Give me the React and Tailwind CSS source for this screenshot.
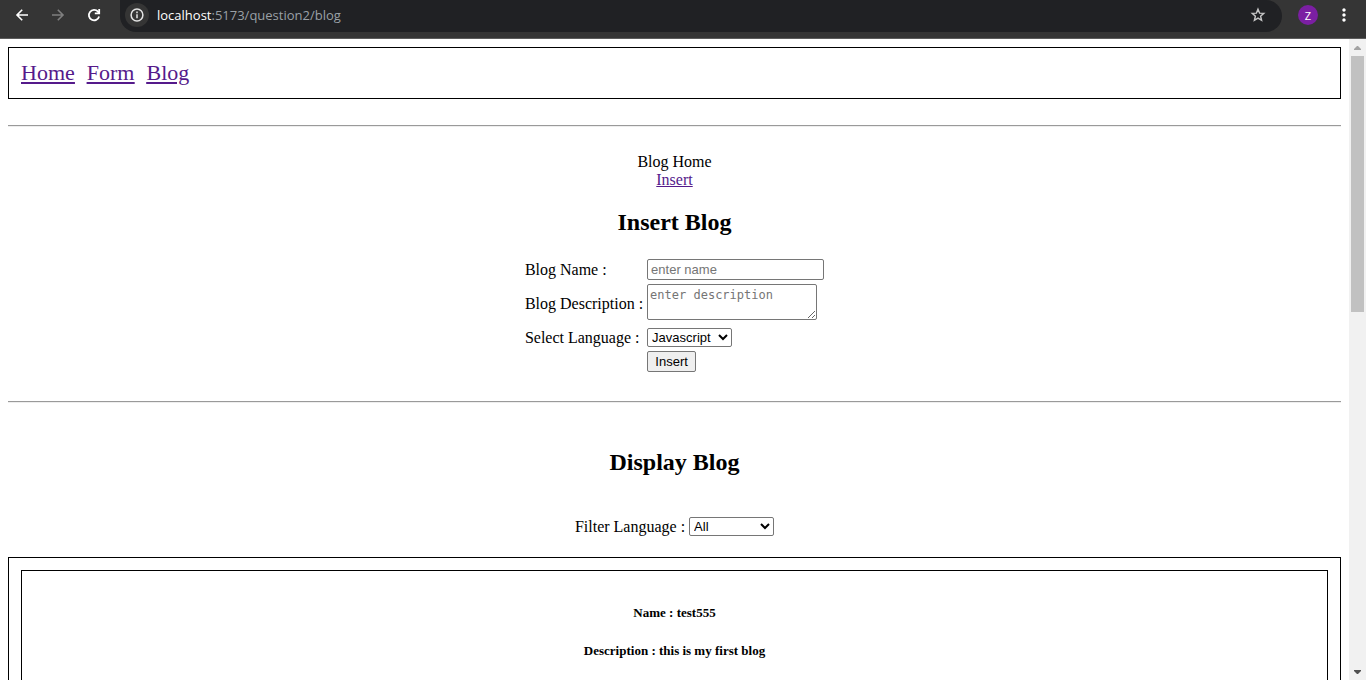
import { useState } from "react";
import { MdMoreVert } from "react-icons/md";

const LANGUAGES = ["Javascript", "Java", "Python", "PHP"];

const BLOGS = [{ name: "test555", description: "this is my first blog" }];

function BarIcon({ children }) {
  return (
    <svg
      width="16"
      height="16"
      viewBox="0 0 16 16"
      fill="none"
      stroke="currentColor"
      strokeWidth="1.6"
      aria-hidden="true"
    >
      {children}
    </svg>
  );
}

function BrowserBar() {
  return (
    <header className="flex h-[39px] shrink-0 items-start border-b border-[#5c5c5c] bg-[#353535] font-['Open_Sans',sans-serif]">
      <div className="flex h-[30px] w-[120px] shrink-0 items-center gap-5 pl-3.5 text-white">
        <button type="button" aria-label="Back">
          <BarIcon>
            <path d="M14 8H3.2M8.2 2.8 3 8l5.2 5.2" />
          </BarIcon>
        </button>
        <button type="button" aria-label="Forward" className="text-[#7f7f7f]">
          <BarIcon>
            <path d="M2 8h10.8M7.8 2.8 13 8l-5.2 5.2" />
          </BarIcon>
        </button>
        <button type="button" aria-label="Reload">
          <BarIcon>
            <path d="M13.1 9.5A5.2 5.2 0 1 1 12 4.7L13 5.8" strokeWidth="1.8" />
            <path d="M13.2 2v4.4H8.8" strokeWidth="1.8" />
          </BarIcon>
        </button>
      </div>
      <div className="flex h-8 min-w-0 flex-1 items-center rounded-b-2xl rounded-tr-2xl bg-[#202124] pb-0.5 pl-[5px] pr-4">
        <button
          type="button"
          aria-label="Site information"
          className="flex size-6 items-center justify-center rounded-full bg-[#353535] text-[#e3e3e3]"
        >
          <BarIcon>
            <circle cx="8" cy="8" r="5.9" strokeWidth="1.5" />
            <path d="M8 7.2v4M8 4.6v1.6" strokeWidth="1.5" />
          </BarIcon>
        </button>
        <p className="ml-2 flex-1 text-[13px] leading-5 text-[#9aa0a6]">
          <span className="text-white">localhost</span>:5173/question2/blog
        </p>
        <button type="button" aria-label="Bookmark this page" className="text-[#c7c7c7]">
          <BarIcon>
            <path
              d="m8 2.2 1.6 3.9 4.2.3-3.2 2.8 1 4.1L8 11.1l-3.6 2.2 1-4.1-3.2-2.8 4.2-.3z"
              strokeWidth="1.4"
            />
          </BarIcon>
        </button>
      </div>
      <div className="flex h-[30px] w-[84px] shrink-0 items-center gap-4 pl-4">
        <button
          type="button"
          aria-label="Profile"
          className="flex size-5 items-center justify-center rounded-full bg-[#7b1fa2] text-[11px] leading-none text-white"
        >
          Z
        </button>
        <button type="button" aria-label="Menu" className="text-white">
          <MdMoreVert className="size-5" />
        </button>
      </div>
    </header>
  );
}

function Scrollbar() {
  return (
    <div aria-hidden="true" className="flex w-[17px] shrink-0 flex-col items-center bg-[#f1f1f1]">
      <div className="flex h-[17px] items-center">
        <svg width="7" height="4" viewBox="0 0 7 4" fill="#a3a3a3">
          <path d="M0 4V3L3 0h1l3 3v1Z" />
        </svg>
      </div>
      <div className="h-64 w-[13px] bg-[#c1c1c1]" />
      <div className="mt-auto flex h-[17px] items-center">
        <svg width="7" height="4" viewBox="0 0 7 4" fill="#505050">
          <path d="M0 0h7v1L4 4H3L0 1Z" />
        </svg>
      </div>
    </div>
  );
}

function Rule() {
  return <hr className="h-0.5 border-t border-b border-t-[#9a9a9a] border-b-[#eeeeee]" />;
}

function LanguageSelect({ id, options, value, onChange }) {
  return (
    <select
      id={id}
      value={value}
      onChange={(event) => onChange(event.target.value)}
      className="h-[19px] w-[85px] rounded-[2px] border border-[#767676] bg-white font-['Liberation_Sans',Arial,sans-serif] text-[13px] text-black"
    >
      {options.map((option) => (
        <option key={option}>{option}</option>
      ))}
    </select>
  );
}

function InsertForm() {
  const [language, setLanguage] = useState("Javascript");

  return (
    <form
      onSubmit={(event) => event.preventDefault()}
      className="mt-[23px] grid grid-cols-[auto_auto] items-center justify-center gap-1 text-left"
    >
      <label htmlFor="blog-name">Blog Name :</label>
      <input
        id="blog-name"
        type="text"
        placeholder="enter name"
        className="h-[21px] w-[177px] rounded-[2px] border border-[#767676] px-[3px] font-['Liberation_Sans',Arial,sans-serif] text-[13px] placeholder:text-[#757575]"
      />
      <label htmlFor="blog-description">Blog Description :</label>
      <textarea
        id="blog-description"
        rows={2}
        placeholder="enter description"
        className="mb-1 h-9 w-[170px] rounded-[2px] border border-[#767676] px-0.5 py-[3px] font-['DejaVu_Sans_Mono',monospace] text-[12px] leading-[15px] placeholder:text-[#757575]"
      />
      <label htmlFor="blog-language">Select Language :</label>
      <LanguageSelect
        id="blog-language"
        options={LANGUAGES}
        value={language}
        onChange={setLanguage}
      />
      <button
        type="submit"
        className="col-start-2 h-[21px] w-[49px] rounded-[2px] border border-[#767676] bg-[#efefef] text-center font-['Liberation_Sans',Arial,sans-serif] text-[13px] leading-none"
      >
        Insert
      </button>
    </form>
  );
}

function BlogCard({ blog }) {
  return (
    <article className="border border-black pt-8 pb-72 text-[13px] leading-5 font-bold">
      <h5>Name : {blog.name}</h5>
      <h5 className="mt-[18px]">Description : {blog.description}</h5>
    </article>
  );
}

export default function App() {
  const [filter, setFilter] = useState("All");

  return (
    <div className="flex h-screen flex-col overflow-hidden bg-white">
      <BrowserBar />
      <div className="flex min-h-0 flex-1">
        <main className="min-w-0 flex-1 overflow-hidden p-2 text-center font-['Liberation_Serif','Times_New_Roman',serif] text-base leading-[18px] text-black">
          <nav className="flex gap-3 border border-black p-3 text-[22px] leading-[26px] text-[#551a8b] underline">
            <a href="#home">Home</a>
            <a href="#form">Form</a>
            <a href="#blog">Blog</a>
          </nav>
          <div className="mt-[26px]">
            <Rule />
          </div>
          <section className="mt-[26px]">
            <p>Blog Home</p>
            <a href="#insert" className="text-[#551a8b] underline">
              Insert
            </a>
            <h2 className="mt-5 text-2xl leading-[27px] font-bold">Insert Blog</h2>
            <InsertForm />
          </section>
          <div className="mt-[29px]">
            <Rule />
          </div>
          <section className="mt-[46px]">
            <h2 className="text-2xl leading-[27px] font-bold">Display Blog</h2>
            <div className="mt-[41px] flex items-center justify-center gap-1">
              <label htmlFor="filter-language">Filter Language :</label>
              <LanguageSelect
                id="filter-language"
                options={["All", ...LANGUAGES]}
                value={filter}
                onChange={setFilter}
              />
            </div>
            <div className="mt-[21px] flex flex-col gap-3 border border-black p-3">
              {BLOGS.map((blog) => (
                <BlogCard key={blog.name} blog={blog} />
              ))}
            </div>
          </section>
        </main>
        <Scrollbar />
      </div>
    </div>
  );
}
